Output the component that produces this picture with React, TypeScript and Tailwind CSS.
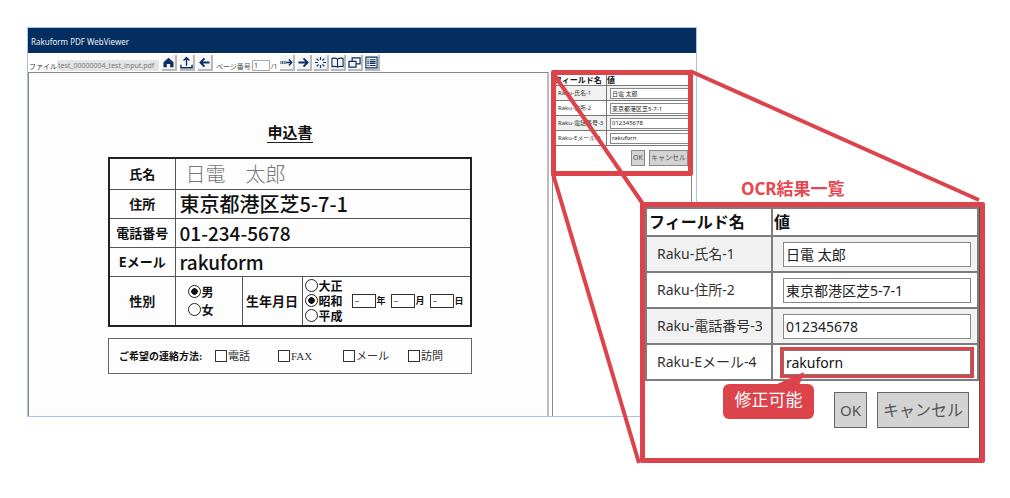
import React from "react";

type Field = { id: string; label: string; value: string };

const fields: Field[] = [
  { id: "name", label: "Raku-氏名-1", value: "日電 太郎" },
  { id: "address", label: "Raku-住所-2", value: "東京都港区芝5-7-1" },
  { id: "phone", label: "Raku-電話番号-3", value: "012345678" },
  { id: "mail", label: "Raku-Eメール-4", value: "rakuforn" },
];

function ToolButton({ label, children }: { label: string; children: React.ReactNode }) {
  return (
    <button
      type="button"
      aria-label={label}
      className="flex h-4 w-[15px] shrink-0 items-center justify-center border-r-2 border-b-2 border-[#b9b9b9] bg-[#f5f5f5] text-[#0b2f62]"
    >
      <svg viewBox="0 0 14 14" className="h-[13px] w-[13px] shrink-0" fill="none" stroke="currentColor" strokeWidth="1.5">
        {children}
      </svg>
    </button>
  );
}

function Toolbar() {
  return (
    <div className="flex h-[19px] items-end gap-[3px] pr-[2px] pb-px pl-px text-[7px] leading-[9px] text-[#555]">
      <div className="flex items-end">
        <label htmlFor="file" className="text-[#333]">ファイル</label>
        <input
          id="file"
          readOnly
          defaultValue="test_00000004_test_input.pdf"
          className="h-[11px] w-[102px] bg-[#e4e4e4] px-px text-[7px] text-[#777]"
        />
      </div>
      <ToolButton label="ホーム">
        <path d="M7 1.8 L1.6 6.8 V12 H5.2 V8.6 H8.8 V12 H12.4 V6.8 Z" fill="currentColor" stroke="none" />
      </ToolButton>
      <ToolButton label="アップロード">
        <path d="M7 10.5 V2 M3.8 5 L7 1.6 L10.2 5 M1 9.5 V12.6 H13 V9.5" />
      </ToolButton>
      <ToolButton label="前へ">
        <path d="M12.4 7 H3 M7 2.6 L2.6 7 L7 11.4" strokeWidth="2" />
      </ToolButton>
      <div className="flex items-end gap-px">
        <label htmlFor="page">ページ番号</label>
        <input
          id="page"
          defaultValue="1"
          className="h-[11px] w-[18px] border border-[#aaa] bg-white px-px text-[7px] text-[#333]"
        />
        <span>/1</span>
      </div>
      <div className="flex items-end gap-[2px]">
        <ToolButton label="ページへ移動">
          <path d="M1 5.4 V8.6 M2.8 5.4 V8.6 M4.6 5.4 V8.6 M6.4 5.4 V8.6" strokeWidth="0.9" />
          <path d="M7 7 H12 M9.6 3.8 L12.6 7 L9.6 10.2" />
        </ToolButton>
        <ToolButton label="次へ">
          <path d="M1.6 7 H11 M7 2.6 L11.4 7 L7 11.4" strokeWidth="2" />
        </ToolButton>
        <ToolButton label="読み取り">
          <path d="M7 1 V4.2 M7 9.8 V13 M1 7 H4.2 M9.8 7 H13 M2.8 2.8 L5 5 M9 9 L11.2 11.2 M2.8 11.2 L5 9 M9 5 L11.2 2.8" strokeWidth="1.3" />
        </ToolButton>
        <ToolButton label="見開き">
          <path d="M7 3.4 C5.4 2.2 3 2.2 1 2.6 V11.4 C3 11 5.4 11 7 12 C8.6 11 11 11 13 11.4 V2.6 C11 2.2 8.6 2.2 7 3.4 Z M7 3.4 V12" strokeWidth="1.2" />
        </ToolButton>
        <ToolButton label="ウィンドウ切替">
          <path d="M4.5 5.4 V2 H13 V8.4 H9 M1 5.8 H8.6 V12 H1 Z" strokeWidth="1.3" />
        </ToolButton>
        <ToolButton label="一覧">
          <path d="M1 1.2 H13 V12.8 H1 Z M5 4 H11.4 M5 6 H11.4 M5 8 H11.4 M5 10.2 H11.4 M2.6 4 H4 M2.6 6 H4 M2.6 8 H4 M2.6 10.2 H4" strokeWidth="1.2" />
        </ToolButton>
      </div>
    </div>
  );
}

function Radio({ name, label, checked }: { name: string; label: string; checked?: boolean }) {
  return (
    <label className="flex items-center gap-px">
      <input
        type="radio"
        name={name}
        defaultChecked={checked}
        className="h-[13px] w-[13px] shrink-0 appearance-none rounded-full border border-[#222] bg-white checked:bg-[radial-gradient(circle,#111_0_3px,transparent_3.5px)]"
      />
      {label}
    </label>
  );
}

function DatePart({ label }: { label: string }) {
  return (
    <label className="flex items-center gap-px text-[9px] font-bold">
      <input
        defaultValue="–"
        className="h-[14px] w-6 border border-[#333] bg-white px-[2px] text-[9px] font-normal"
      />
      {label}
    </label>
  );
}

function Contact({ label }: { label: string }) {
  return (
    <label className="flex items-center gap-px">
      <input type="checkbox" className="h-3 w-3 shrink-0 appearance-none border border-[#333] bg-white checked:bg-[#333]" />
      {label}
    </label>
  );
}

function ApplicationForm() {
  const head = "border border-[#555] p-0 text-center text-[13px] leading-5 font-bold";
  const cell = "border border-[#555] py-0 pr-0 pl-1 leading-6 font-medium";
  return (
    <div className="pt-[50px] pr-[75px] pl-[79px] font-['Noto_Sans_CJK_JP',sans-serif] text-[#111]">
      <h2 className="text-center text-[15px] leading-[18px] font-bold">
        <span className="border-b border-[#222]">申込書</span>
      </h2>
      <table className="mt-4 w-full table-fixed border-collapse border-2 border-[#222]">
        <colgroup>
          <col className="w-[66px]" />
          <col className="w-[67px]" />
          <col className="w-[60px]" />
          <col />
        </colgroup>
        <tbody>
          <tr className="h-[31px]">
            <th scope="row" className={head}>氏名</th>
            <td colSpan={3} className="border border-[#555] py-0 pr-0 pl-[10px] text-xl leading-6 font-light text-[#777]">日電　太郎</td>
          </tr>
          <tr className="h-[29px]">
            <th scope="row" className={head}>住所</th>
            <td colSpan={3} className={cell + " text-[20px]"}>東京都港区芝5-7-1</td>
          </tr>
          <tr className="h-[29px]">
            <th scope="row" className={head}>電話番号</th>
            <td colSpan={3} className={cell + " text-[19px]"}>01-234-5678</td>
          </tr>
          <tr className="h-[29px]">
            <th scope="row" className={head}>Eメール</th>
            <td colSpan={3} className={cell + " text-[19px]"}>rakuform</td>
          </tr>
          <tr className="h-[50px]">
            <th scope="row" className={head}>性別</th>
            <td className="border border-[#555] py-0 pr-0 pl-3 text-[12px] leading-[18px] font-bold">
              <Radio name="gender" label="男" checked />
              <Radio name="gender" label="女" />
            </td>
            <th scope="row" className={head}>生年月日</th>
            <td className="border border-[#555] py-0 pr-0 pl-[2px]">
              <div className="flex items-center gap-[9px]">
                <div className="text-[12px] leading-[15px] font-bold">
                  <Radio name="era" label="大正" />
                  <Radio name="era" label="昭和" checked />
                  <Radio name="era" label="平成" />
                </div>
                <div className="flex gap-[5px]">
                  <DatePart label="年" />
                  <DatePart label="月" />
                  <DatePart label="日" />
                </div>
              </div>
            </td>
          </tr>
        </tbody>
      </table>
      <div className="mt-[11px] flex h-9 items-center border border-[#666] px-[10px] font-['Liberation_Serif','Noto_Sans_CJK_JP',serif] text-[11px] text-[#333]">
        <span className="w-24 text-[10px] font-bold whitespace-nowrap text-[#111]">ご希望の連絡方法:</span>
        <div className="grid flex-1 grid-cols-[63px_65px_65px_1fr]">
          <Contact label="電話" />
          <Contact label="FAX" />
          <Contact label="メール" />
          <Contact label="訪問" />
        </div>
      </div>
    </div>
  );
}

function SmallResults() {
  return (
    <div className="w-full overflow-hidden">
      <table className="w-[142px] table-fixed border-collapse text-[6px] leading-[8px] text-[#333]">
        <thead>
          <tr className="h-3 text-left text-[8px] text-[#111]">
            <th className="w-[53px] border border-[#777] p-0 whitespace-nowrap">フィールド名</th>
            <th className="border border-[#777] p-0">値</th>
          </tr>
        </thead>
        <tbody>
          {fields.map((f) => (
            <tr key={f.id} className="h-[15px] odd:bg-[#f1f1f1]">
              <td className="border border-[#777] py-0 pr-0 pl-[4px] whitespace-nowrap">
                <label htmlFor={"list-" + f.id}>{f.label}</label>
              </td>
              <td className="border border-[#777] py-0 pr-0 pl-[3px]">
                <input
                  id={"list-" + f.id}
                  defaultValue={f.value}
                  className="block h-[11px] w-full border border-[#888] bg-white px-px text-[6px] text-[#222]"
                />
              </td>
            </tr>
          ))}
        </tbody>
      </table>
      <div className="mt-1 flex justify-end gap-1 pr-[3px] text-[#555]">
        <button type="button" className="h-4 w-[14px] border border-[#888] bg-[#d3d3d3] text-[7px]">OK</button>
        <button type="button" className="h-4 w-[39px] border border-[#888] bg-[#d3d3d3] text-[7px] whitespace-nowrap">キャンセル</button>
      </div>
    </div>
  );
}

function EnlargedResults() {
  return (
    <section className="absolute top-[202px] left-[640px] h-[261px] w-[345px] rounded-[2px] border-[5px] border-[#dc434b] bg-white">
      <div className="h-full border-r border-[#555]">
        <table className="w-full table-fixed border-collapse text-[14px] leading-5 text-[#333]">
          <thead>
            <tr className="h-7 text-left text-base text-[#111]">
              <th className="w-[126px] border-2 border-[#7d7d7d] py-0 pr-0 pl-[2px]">フィールド名</th>
              <th className="border-2 border-[#7d7d7d] py-0 pr-0 pl-px">値</th>
            </tr>
          </thead>
          <tbody>
            {fields.map((f) => (
              <tr key={f.id} className="h-9 odd:bg-[#f1f1f1]">
                <td className="border-2 border-[#7d7d7d] py-0 pr-0 pl-[10px] whitespace-nowrap">
                  <label htmlFor={"zoom-" + f.id}>{f.label}</label>
                </td>
                <td className="border-2 border-[#7d7d7d] py-0 pr-[6px] pl-[10px]">
                  <input
                    id={"zoom-" + f.id}
                    defaultValue={f.value}
                    className={
                      f.id === "mail"
                        ? "block h-[25px] w-full border border-[#777] bg-white px-[2px] text-[14px] text-[#111] outline-3 outline-[#dc434b]"
                        : "block h-[25px] w-full border border-[#888] bg-white px-[2px] text-[14px] text-[#222]"
                    }
                  />
                </td>
              </tr>
            ))}
          </tbody>
        </table>
        <div className="mt-[11px] flex justify-end gap-[10px] pr-[10px] text-[#555]">
          <button type="button" className="h-9 w-[33px] border border-[#666] bg-[#d3d3d3] text-[15px]">OK</button>
          <button type="button" className="h-9 w-[92px] border border-[#666] bg-[#d3d3d3] text-base whitespace-nowrap">キャンセル</button>
        </div>
      </div>
    </section>
  );
}

export default function App() {
  return (
    <main className="relative min-h-screen max-w-[1010px] bg-white pt-[27px] pr-[313px] pb-20 pl-[27px] font-['Noto_Sans','Noto_Sans_CJK_JP',sans-serif]">
      <div className="border border-[#a3c5f2] bg-white">
        <header className="flex h-[25px] items-center bg-[#042e60] px-[3px] pt-[2px]">
          <h1 className="text-[8px] leading-3 text-[#e8eef6]">Rakuform PDF WebViewer</h1>
        </header>
        <Toolbar />
        <div className="flex h-[344px] gap-[3px] pr-1">
          <div className="flex-1 border-t border-r-2 border-l border-t-[#888] border-r-[#bbb] border-l-[#888] bg-[#fdfdfd]">
            <ApplicationForm />
          </div>
          <aside className="w-[140px] border border-b-0 border-[#888]">
            <SmallResults />
          </aside>
        </div>
      </div>

      <div className="pointer-events-none absolute top-[70px] left-[551px] h-[106px] w-[142px] rounded-[2px] border-[5px] border-[#dc434b]" />
      <svg className="pointer-events-none absolute top-0 left-0 h-[498px] w-[1010px]" viewBox="0 0 1010 498" stroke="#dc434b" strokeWidth="4" aria-hidden="true">
        <line x1="690" y1="71" x2="979" y2="200" />
        <line x1="553" y1="73" x2="643" y2="204" />
        <line x1="553" y1="174" x2="639" y2="463" />
      </svg>
      <p className="absolute top-[179px] left-[741px] text-[17px] leading-5 font-bold whitespace-nowrap text-[#e8474f]">OCR結果一覧</p>
      <EnlargedResults />
      <div className="absolute top-[384px] left-[723px] flex h-[35px] w-[91px] items-center justify-center rounded-md bg-[#dc434b] pb-1 text-[17px] leading-6 whitespace-nowrap text-white">
        修正可能
        <svg className="absolute -top-3 left-[52px] h-[14px] w-[30px]" viewBox="0 0 30 14" fill="#dc434b" aria-hidden="true">
          <path d="M0 13 L29 0 L24 14 H0 Z" />
        </svg>
      </div>
    </main>
  );
}
